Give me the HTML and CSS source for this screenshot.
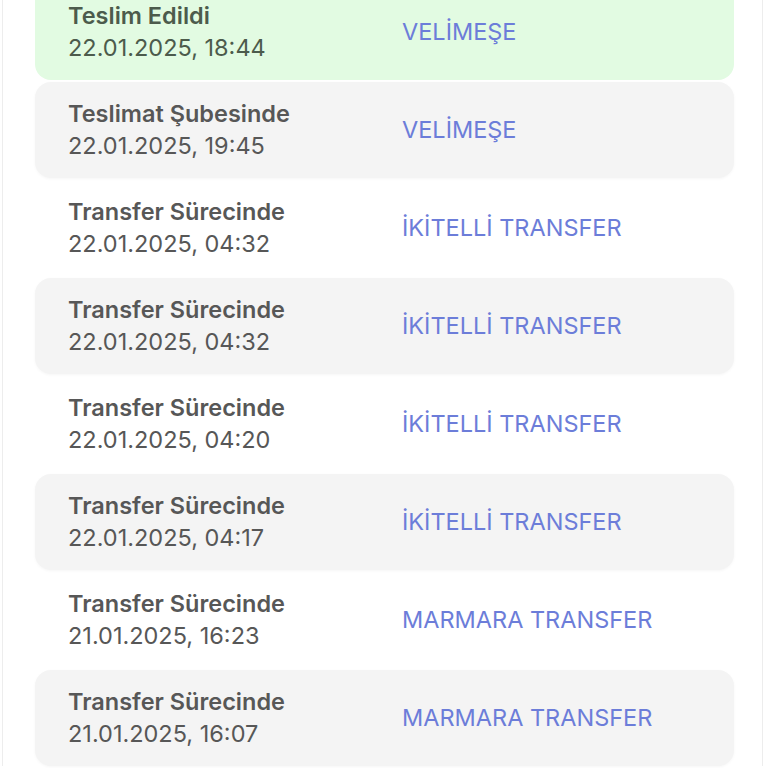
FILE: index.html
```html
<!DOCTYPE html>
<html lang="tr">
<head>
    <meta charset="UTF-8">
    <meta name="viewport" content="width=device-width, initial-scale=1.0">
    <title>Kargo Hareketleri</title>
    <link rel="stylesheet" href="styles.css">
</head>
<body>
    <div class="page">
        <div class="track-list">
            <div class="track-row delivered">
                <div class="track-info">
                    <div class="track-status">Teslim Edildi</div>
                    <div class="track-date">22.01.2025, 18:44</div>
                </div>
                <div class="track-place">VELİMEŞE</div>
            </div>
            <div class="track-row shaded">
                <div class="track-info">
                    <div class="track-status">Teslimat Şubesinde</div>
                    <div class="track-date">22.01.2025, 19:45</div>
                </div>
                <div class="track-place">VELİMEŞE</div>
            </div>
            <div class="track-row">
                <div class="track-info">
                    <div class="track-status">Transfer Sürecinde</div>
                    <div class="track-date">22.01.2025, 04:32</div>
                </div>
                <div class="track-place">İKİTELLİ TRANSFER</div>
            </div>
            <div class="track-row shaded">
                <div class="track-info">
                    <div class="track-status">Transfer Sürecinde</div>
                    <div class="track-date">22.01.2025, 04:32</div>
                </div>
                <div class="track-place">İKİTELLİ TRANSFER</div>
            </div>
            <div class="track-row">
                <div class="track-info">
                    <div class="track-status">Transfer Sürecinde</div>
                    <div class="track-date">22.01.2025, 04:20</div>
                </div>
                <div class="track-place">İKİTELLİ TRANSFER</div>
            </div>
            <div class="track-row shaded">
                <div class="track-info">
                    <div class="track-status">Transfer Sürecinde</div>
                    <div class="track-date">22.01.2025, 04:17</div>
                </div>
                <div class="track-place">İKİTELLİ TRANSFER</div>
            </div>
            <div class="track-row">
                <div class="track-info">
                    <div class="track-status">Transfer Sürecinde</div>
                    <div class="track-date">21.01.2025, 16:23</div>
                </div>
                <div class="track-place">MARMARA TRANSFER</div>
            </div>
            <div class="track-row shaded">
                <div class="track-info">
                    <div class="track-status">Transfer Sürecinde</div>
                    <div class="track-date">21.01.2025, 16:07</div>
                </div>
                <div class="track-place">MARMARA TRANSFER</div>
            </div>
        </div>
    </div>
</body>
</html>
```

FILE: styles.css
```css
* {
    margin: 0;
    padding: 0;
    box-sizing: border-box;
}

body {
    font-family: 'Inter', 'Roboto', sans-serif;
    background: #ffffff;
    height: 768px;
    overflow: hidden;
}

.page {
    width: 761px;
    margin-left: 2px;
    min-height: 100vh;
    padding: 0 28px 0 32px;
    border-left: 1px solid #ededed;
    border-right: 1px solid #ededed;
}

.track-list {
    display: flex;
    flex-direction: column;
    gap: 2px;
    margin-top: -16px;
}

.track-row {
    display: grid;
    grid-template-columns: 334px 1fr;
    align-items: center;
    height: 96px;
    padding: 16px 33px;
    border-radius: 16px;
    font-size: 23.5px;
    line-height: 32px;
    color: #575757;
}

.track-row.shaded {
    background: #f4f4f4;
    box-shadow: 0 1px 3px rgba(0,0,0,0.04);
}

.track-row.delivered {
    background: #e2fbe2;
    color: #4c5b4c;
}

.track-status {
    font-weight: 600;
}

.track-date {
    font-weight: 400;
}

.track-place {
    color: #6c7dd9;
}
```
